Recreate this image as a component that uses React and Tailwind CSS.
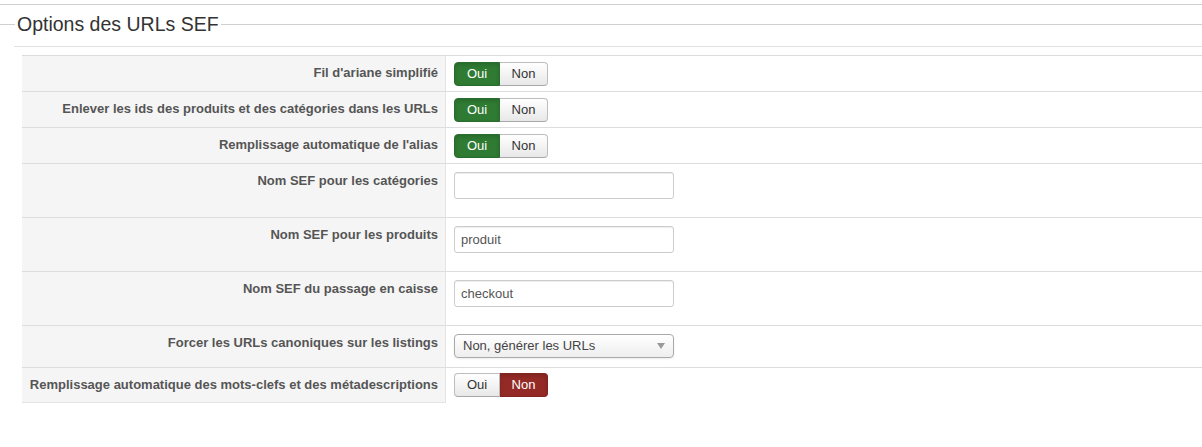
import { useState } from "react";

const Toggle = ({ value }) => {
    const yes = value === "oui";
    return (
        <div className="flex h-[24px] text-[13px] leading-[22px]">
            <button
                className={
                    yes
                        ? "w-[46px] rounded-l-[4px] border border-[#2a6b2e] bg-[#2f7b33] text-white shadow-[inset_0_2px_4px_rgba(0,0,0,0.15)]"
                        : "w-[46px] rounded-l-[4px] border border-[#bdbdbd] border-b-[#a8a8a8] bg-gradient-to-b from-white to-[#e8e8e8] text-[#333]"
                }
            >
                Oui
            </button>
            <button
                className={
                    yes
                        ? "w-[48px] rounded-r-[4px] border border-l-0 border-[#bdbdbd] border-b-[#a8a8a8] bg-gradient-to-b from-white to-[#e8e8e8] text-[#333]"
                        : "w-[48px] rounded-r-[4px] border border-l-0 border-[#82241f] bg-[#942a25] text-white shadow-[inset_0_2px_4px_rgba(0,0,0,0.15)]"
                }
            >
                Non
            </button>
        </div>
    );
};

const TextInput = ({ value }) => (
    <input
        type="text"
        defaultValue={value}
        className="block w-[220px] h-[27px] rounded-[3px] border border-[#cccccc] px-[6px] text-[13px] text-[#555] shadow-[inset_0_1px_1px_rgba(0,0,0,0.075)] outline-none"
    />
);

const Select = ({ value }) => (
    <div className="flex items-center justify-between w-[220px] h-[24px] rounded-[4px] border border-[#aaaaaa] bg-gradient-to-b from-white to-[#eeeeee] pl-[8px] pr-[8px] text-[13px] text-[#444] shadow-[0_1px_2px_rgba(0,0,0,0.08)]">
        <span>{value}</span>
        <svg width="8" height="6" viewBox="0 0 8 6">
            <path d="M0 0 L8 0 L4 6 Z" fill="#999" />
        </svg>
    </div>
);

const Row = ({ label, pad, last, children }) => (
    <div className="flex border-t border-[#dddddd]">
        <div
            className={`w-[424px] shrink-0 bg-[#f5f5f5] border-r border-[#e4e4e4] pr-[7px] pt-[8px] text-right text-[13px] leading-[18px] font-bold text-[#555] ${
                last ? "border-b" : ""
            }`}
        >
            {label}
        </div>
        <div className={`flex-1 pl-[8px] ${pad}`}>{children}</div>
    </div>
);

export default function App() {
    const [settings] = useState({
        breadcrumb: "oui",
        removeIds: "oui",
        autoAlias: "oui",
        autoMeta: "non",
    });

    return (
        <div className="w-[1202px] h-[447px] bg-white font-['Liberation_Sans',Arial,sans-serif]">
            <div className="h-[4px]" />
            <div className="border-t border-[#cfcfcf]" />

            {/* legend */}
            <div className="mt-[7px] flex h-[24px] items-center">
                <div className="w-[15px] h-px bg-[#d0d0d0]" />
                <span className="px-[2px] text-[19.5px] leading-[24px] text-[#333]">Options des URLs SEF</span>
                <div className="flex-1 h-px bg-[#d0d0d0]" />
            </div>
            <div className="ml-[14px] mt-[10px] border-t border-[#e2e2e2]" />

            <div className="ml-[22px] mt-[8px]">
                <Row label="Fil d'ariane simplifié" pad="pt-[6px] pb-[5px]">
                    <Toggle value={settings.breadcrumb} />
                </Row>
                <Row label="Enlever les ids des produits et des catégories dans les URLs" pad="pt-[6px] pb-[5px]">
                    <Toggle value={settings.removeIds} />
                </Row>
                <Row label="Remplissage automatique de l'alias" pad="pt-[6px] pb-[5px]">
                    <Toggle value={settings.autoAlias} />
                </Row>
                <Row label="Nom SEF pour les catégories" pad="pt-[8px] pb-[18px]">
                    <TextInput value="" />
                </Row>
                <Row label="Nom SEF pour les produits" pad="pt-[8px] pb-[18px]">
                    <TextInput value="produit" />
                </Row>
                <Row label="Nom SEF du passage en caisse" pad="pt-[8px] pb-[18px]">
                    <TextInput value="checkout" />
                </Row>
                <Row label="Forcer les URLs canoniques sur les listings" pad="pt-[8px] pb-[9px]">
                    <Select value="Non, générer les URLs" />
                </Row>
                <Row label="Remplissage automatique des mots-clefs et des métadescriptions" pad="pt-[5px] pb-[6px]" last>
                    <Toggle value={settings.autoMeta} />
                </Row>
            </div>
        </div>
    );
}
